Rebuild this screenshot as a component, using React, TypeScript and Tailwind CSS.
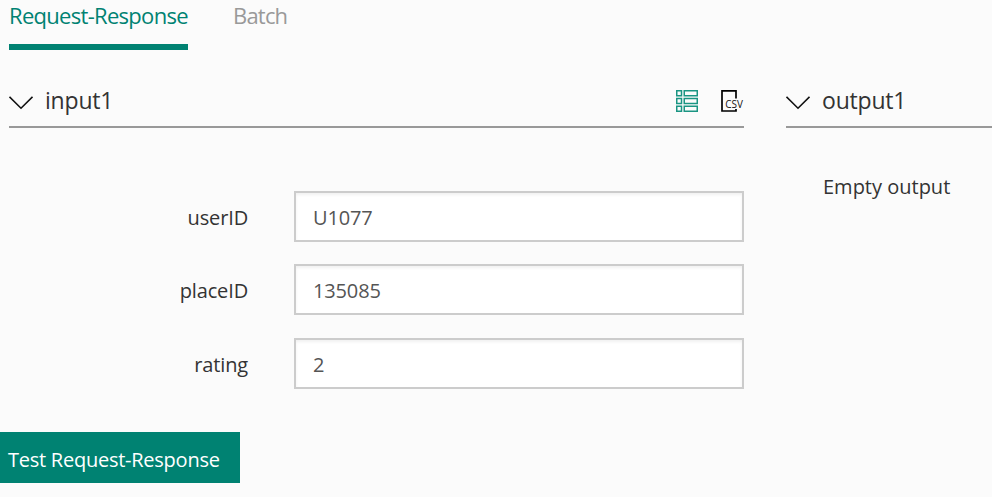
import { useState } from "react";

interface Field {
  name: string;
  value: string;
}

const initialFields: Field[] = [
  { name: "userID", value: "U1077" },
  { name: "placeID", value: "135085" },
  { name: "rating", value: "2" },
];

function ChevronIcon() {
  return (
    <svg width="24" height="14" viewBox="0 0 24 14" fill="none" stroke="#111" strokeWidth="1.6" className="mt-1">
      <path d="M0.5 0.8L12 12.2L23.5 0.8" />
    </svg>
  );
}

function FormIcon() {
  return (
    <svg width="22" height="22" viewBox="0 0 22 22" fill="none" stroke="#1a9583" strokeWidth="1.5">
      {[0.75, 8.5, 16.25].map((y) => (
        <g key={y}>
          <rect x="0.75" y={y} width="4.75" height="5" />
          <rect x="8.25" y={y} width="13" height="5" />
        </g>
      ))}
    </svg>
  );
}

function CsvIcon() {
  return (
    <svg width="23" height="22" viewBox="0 0 23 22" className="overflow-visible">
      <path d="M15 8.5V0.9H1V21H15V19" fill="none" stroke="#000" strokeWidth="1.7" />
      <text x="4.3" y="17.5" fontSize="11" textLength="17.6" lengthAdjust="spacingAndGlyphs" fill="#111" className="font-['Open_Sans',sans-serif]">
        CSV
      </text>
    </svg>
  );
}

export default function App() {
  const [tab, setTab] = useState("request");
  const [fields, setFields] = useState(initialFields);

  const handleChange = (name: string, value: string) => {
    setFields(fields.map((f) => (f.name === name ? { ...f, value } : f)));
  };

  return (
    <div className="h-[497px] overflow-hidden bg-[#fbfbfb] font-['Open_Sans',sans-serif] text-[#333]">
      {/* tabs */}
      <div className="flex h-[50px] gap-[45px] pl-[9px] text-[22px] leading-[30px]">
        <button
          onClick={() => setTab("request")}
          className={`flex w-[179px] items-start whitespace-nowrap border-b-6 tracking-[-0.7px] ${tab === "request" ? "border-[#008272] text-[#008272]" : "border-transparent text-[#999]"}`}
        >
          Request-Response
        </button>
        <button
          onClick={() => setTab("batch")}
          className={`flex items-start border-b-6 tracking-[-0.8px] ${tab === "batch" ? "border-[#008272] text-[#008272]" : "border-transparent text-[#999]"}`}
        >
          Batch
        </button>
      </div>

      <div className="flex gap-[42px] pl-[9px]">
        {/* input */}
        <section className="w-[735px] shrink-0">
          <div className="flex h-[78px] items-end border-b-2 border-[#999] pb-[9px]">
            <div className="flex h-8 flex-1 items-center gap-3">
              <ChevronIcon />
              <h2 className="pb-[3px] text-[23px] leading-8 tracking-[-0.2px]">input1</h2>
            </div>
            <div className="flex h-8 items-center gap-[23px]">
              <FormIcon />
              <CsvIcon />
            </div>
          </div>
          <div className="flex flex-col pt-[63px]">
            {fields.map((field) => (
              <label key={field.name} className="flex items-center not-first:mt-[22px] last:mt-[23px]">
                <span className="w-[239px] pt-[2px] text-right text-[20px] tracking-[-0.15px]">{field.name}</span>
                <input
                  value={field.value}
                  onChange={(e) => handleChange(field.name, e.target.value)}
                  className="ml-[46px] h-[51px] w-[450px] border-2 border-[#ccc] bg-white px-[17px] pt-[2px] text-[20px] tracking-[-0.15px] text-[#555] shadow-[inset_0_2px_3px_rgba(0,0,0,0.06)] outline-none"
                />
              </label>
            ))}
          </div>
        </section>

        {/* output */}
        <section className="flex-1">
          <div className="flex h-[78px] items-end border-b-2 border-[#999] pb-[9px]">
            <div className="flex h-8 items-center gap-3">
              <ChevronIcon />
              <h2 className="pb-[3px] text-[23px] leading-8 tracking-[-0.2px]">output1</h2>
            </div>
          </div>
          <p className="pl-[37px] pt-[43px] text-[20px] leading-8">Empty output</p>
        </section>
      </div>

      <button className="mt-[43px] h-[51px] w-[240px] whitespace-nowrap bg-[#008272] pl-2 pt-1 text-left text-[20px] tracking-[-0.25px] text-white">
        Test Request-Response
      </button>
    </div>
  );
}
